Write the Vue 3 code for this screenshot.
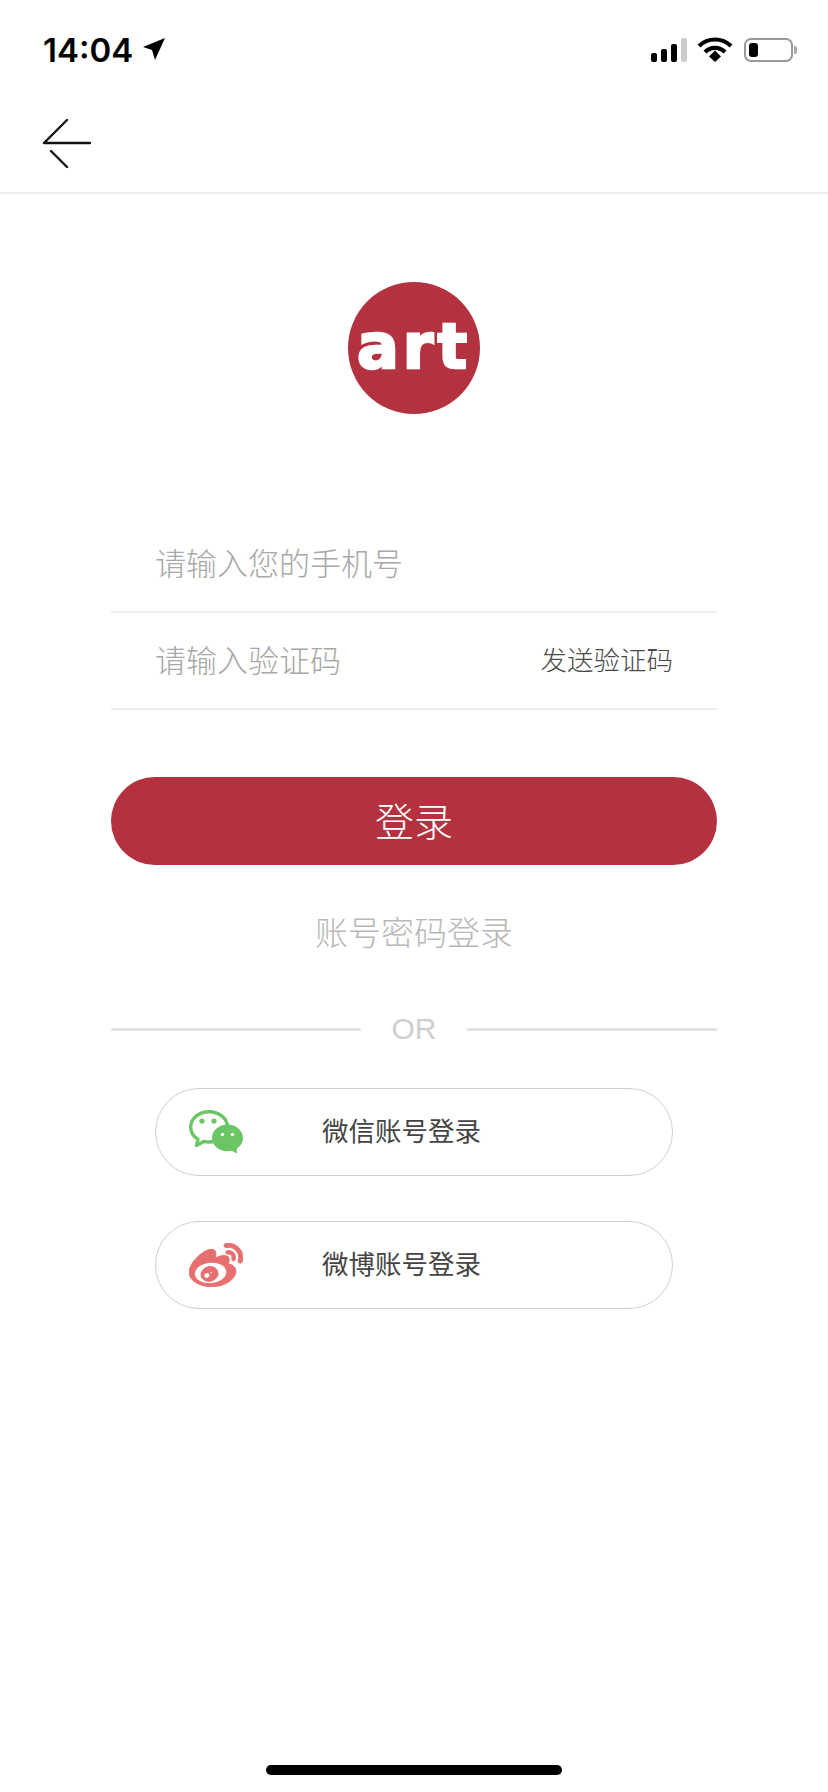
<template>
  <div class="page">
    <div class="status">
      <div class="time-wrap">
        <span class="time">14:04</span>
        <svg class="loc" width="22" height="22" viewBox="0 0 22 22"><polygon points="0,9 22,0 12,22 9,12" fill="#000" /></svg>
      </div>
      <div class="status-right">
        <div class="signal">
          <span class="bar b1"></span>
          <span class="bar b2"></span>
          <span class="bar b3"></span>
          <span class="bar b4"></span>
        </div>
        <svg class="wifi" width="36" height="25" viewBox="0 0 36 25">
          <path d="M2 9 A23 23 0 0 1 34 9" fill="none" stroke="#000" stroke-width="4.2" />
          <path d="M8 15 A14 14 0 0 1 28 15" fill="none" stroke="#000" stroke-width="4.2" />
          <polygon points="12,19.5 18,13.5 24,19.5 18,25" fill="#000" />
        </svg>
        <div class="battery">
          <div class="battery-body"><span class="battery-fill"></span></div>
          <span class="battery-tip"></span>
        </div>
      </div>
    </div>

    <div class="nav">
      <svg class="back" width="50" height="50" viewBox="0 0 50 50">
        <path d="M26 1 L3 24 H49 M10 32 L26 48" fill="none" stroke="#111" stroke-width="2.4" stroke-linecap="round" stroke-linejoin="round" />
      </svg>
    </div>

    <div class="logo"><span class="logo-text">art</span></div>

    <div class="form">
      <div class="field">
        <input class="input" type="text" placeholder="请输入您的手机号" />
      </div>
      <div class="field">
        <input class="input" type="text" placeholder="请输入验证码" />
        <span class="send">发送验证码</span>
      </div>
      <div class="submit">登录</div>
      <div class="alt-login">账号密码登录</div>
      <div class="or">
        <span class="or-line"></span>
        <span class="or-text">OR</span>
        <span class="or-line"></span>
      </div>
    </div>

    <div class="social">
      <div class="social-btn">
        <svg class="social-icon" width="54" height="44" viewBox="0 0 54 44">
          <path d="M20 1.7 C30 1.7 38.5 8.500 38.500 17 C38.500 25.500 30 32 20 32 C18 32 16.500 31.800 15 31.400 L7.500 35.500 L9 29.300 C4.300 26.500 1.700 22 1.700 17 C1.700 8.500 10 1.700 20 1.700 Z" fill="#fff" stroke="#6cc564" stroke-width="3.400" stroke-linejoin="round" />
          <circle cx="13" cy="11" r="2.600" fill="#6cc564" />
          <circle cx="25" cy="11" r="2.600" fill="#6cc564" />
          <path d="M38.500 14.500 C47 14.500 54 20.500 54 28 C54 32.500 51.500 36.200 47.800 38.500 L48 43.500 L42.500 40.800 C41.300 41.100 39.900 41.300 38.500 41.300 C30 41.300 23 35.300 23 28 C23 20.500 30 14.500 38.500 14.500 Z" fill="#6cc564" />
          <circle cx="33.500" cy="24.500" r="1.700" fill="#fff" />
          <circle cx="43.500" cy="24.500" r="1.700" fill="#fff" />
        </svg>
        <span class="social-label">微信账号登录</span>
      </div>
      <div class="social-btn">
        <svg class="social-icon" width="54" height="44" viewBox="0 30 512 420">
          <path fill="#e86f6f" stroke="#e86f6f" stroke-width="9" d="M407 177.6c7.600-24-13.400-46.800-37.400-41.700-22 4.800-28.800-28.100-7.100-32.800 50.100-10.900 92.300 37.100 76.500 84.800-6.800 21.200-38.800 10.800-32-10.300zM214.800 446.700C108.500 446.700 0 395.300 0 310.400c0-44.300 28-95.400 76.300-143.700C176 67 279.500 65.800 249.900 161c-4 13.100 12.300 5.700 12.300 6 79.500-33.600 140.500-16.800 114 51.400-3.700 9.400 1.100 10.900 8.300 13.100 135.700 42.300 34.800 215.200-169.700 215.200zm143.700-146.300c-5.400-55.700-78.500-94-163.400-85.700-84.800 8.600-148.800 60.300-143.400 116s78.500 94 163.400 85.700c84.800-8.600 148.800-60.300 143.400-116zM347.900 35.100c-25.900 5.600-16.800 43.700 8.300 38.300 72.300-15.200 134.800 52.800 111.700 124-7.400 24.200 29.100 37 37.400 12 31.900-99.800-55.100-195.900-157.400-174.300zm-78.500 311c-17.100 38.800-66.800 60-109.100 46.300-40.800-13.100-58-53.400-40.300-89.700 17.700-35.400 63.100-55.400 103.400-45.100 42 10.800 63.100 50.200 46 88.500zm-86.300-30c-12.900-5.400-30 .3-38 12.900-8.300 12.900-4.300 28 8.600 34 13.100 6 30.800.3 39.100-12.900 8-13.100 3.700-28.300-9.700-34zm32.600-13.400c-5.100-1.700-11.400.6-14.300 5.400-2.900 5.100-1.400 10.600 3.700 12.900 5.100 2 11.700-.3 14.600-5.400 2.800-5.200 1.100-10.900-4-12.900z" />
        </svg>
        <span class="social-label">微博账号登录</span>
      </div>
    </div>

    <div class="home-bar"></div>
  </div>
</template>

<script setup>
</script>

<style>
html, body {
  background: #fff;
}
</style>

<style scoped>
.page {
  position: relative;
  width: 828px;
  height: 1792px;
  overflow: hidden;
  background: #fff;
  font-family: "Noto Sans CJK SC", "Liberation Sans", sans-serif;
}

/* status bar */
.status {
  height: 84px;
  box-sizing: border-box;
  padding: 30px 31px 0 43px;
  display: flex;
  justify-content: space-between;
  align-items: flex-start;
}
.time-wrap {
  display: flex;
  align-items: center;
  gap: 10px;
}
.time {
  font-family: Inter, sans-serif;
  font-weight: 600;
  font-size: 33px;
  line-height: 40px;
  color: #000;
}
.loc {
  margin-top: -2px;
}
.status-right {
  display: flex;
  align-items: flex-start;
  padding-top: 8px;
}
.signal {
  display: flex;
  align-items: flex-end;
  gap: 4px;
  height: 24px;
  margin-right: 10px;
}
.bar {
  width: 6px;
  background: #000;
  border-radius: 2px;
}
.b1 { height: 9px; }
.b2 { height: 13px; }
.b3 { height: 18px; }
.b4 { height: 24px; background: #ccc; }
.wifi {
  margin-right: 11px;
  margin-top: -1px;
}
.battery {
  display: flex;
  align-items: center;
  height: 24px;
}
.battery-body {
  width: 49px;
  height: 24px;
  box-sizing: border-box;
  border: 2px solid #999;
  border-radius: 7px;
  padding: 3px;
}
.battery-fill {
  display: block;
  width: 9px;
  height: 14px;
  background: #000;
  border-radius: 3px;
}
.battery-tip {
  width: 3px;
  height: 8px;
  margin-left: 1px;
  background: #aaa;
  border-radius: 0 2px 2px 0;
}

/* nav */
.nav {
  height: 110px;
  box-sizing: border-box;
  padding: 35px 0 0 41px;
  border-bottom: 2px solid #eeeeee;
}
.back {
  display: block;
}

/* logo */
.logo {
  width: 132px;
  height: 132px;
  margin: 88px auto 0;
  border-radius: 50%;
  background: #b43240;
  display: flex;
  align-items: center;
  justify-content: center;
}
.logo-text {
  font-family: "DejaVu Sans", sans-serif;
  font-weight: 700;
  font-size: 62px;
  line-height: 1;
  letter-spacing: 4px;
  color: #fff;
  -webkit-text-stroke: 2.500px #fff;
  transform: translateY(-1px);
}

/* form */
.form {
  width: 606px;
  margin: 102px auto 0;
}
.field {
  height: 97px;
  box-sizing: border-box;
  border-bottom: 2px solid #eeeeee;
  padding: 0 44px 4px;
  display: flex;
  align-items: center;
  justify-content: space-between;
}
.input {
  flex: 1;
  min-width: 0;
  border: none;
  outline: none;
  padding: 0;
  background: transparent;
  font-family: "Noto Sans CJK SC", sans-serif;
  font-weight: 300;
  font-size: 31px;
  color: #333;
}
.input::placeholder {
  color: #a8a8a8;
  opacity: 1;
}
.send {
  font-size: 26.500px;
  font-weight: 300;
  color: #4a4a4a;
  white-space: nowrap;
}
.submit {
  height: 88px;
  box-sizing: border-box;
  padding-bottom: 4px;
  margin-top: 67px;
  border-radius: 44px;
  background: #b43240;
  color: #fff;
  font-size: 39px;
  font-weight: 300;
  display: flex;
  align-items: center;
  justify-content: center;
}
.alt-login {
  margin-top: 43px;
  text-align: center;
  font-size: 33px;
  font-weight: 300;
  line-height: 46px;
  color: #b8b8b8;
}
.or {
  display: flex;
  align-items: center;
  margin-top: 55px;
  height: 40px;
}
.or-line {
  flex: 1;
  height: 3px;
  background: #e4e4e4;
}
.or-text {
  width: 106px;
  text-align: center;
  font-family: "Liberation Sans", sans-serif;
  font-size: 30px;
  color: #cfcfcf;
}

/* social buttons */
.social {
  width: 518px;
  margin: 39px auto 0;
  display: flex;
  flex-direction: column;
  gap: 45px;
}
.social-btn {
  position: relative;
  height: 88px;
  box-sizing: border-box;
  border: 1px solid #cfcfcf;
  border-radius: 44px;
  display: flex;
  align-items: center;
  padding-left: 33px;
}
.social-icon {
  display: block;
  flex: none;
}
.social-label {
  margin-left: 79px;
  padding-bottom: 6px;
  font-size: 26.500px;
  font-weight: 400;
  color: #444;
}

.home-bar {
  position: absolute;
  left: 266px;
  bottom: 17px;
  width: 296px;
  height: 10px;
  border-radius: 5px;
  background: #000;
}
</style>
